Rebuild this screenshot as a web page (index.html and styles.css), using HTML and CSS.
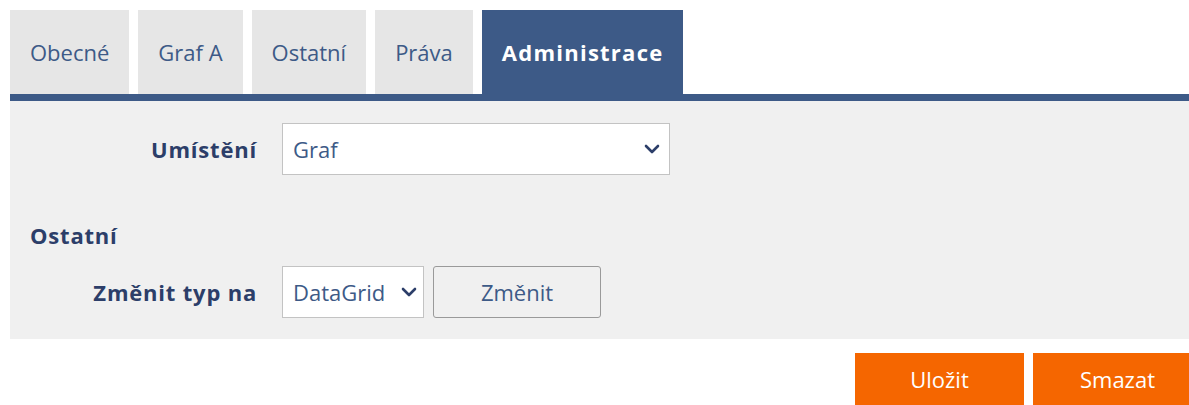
FILE: index.html
```html
<!DOCTYPE html>
<html lang="cs">
<head>
<meta charset="utf-8">
<title>Administrace</title>
<link rel="stylesheet" href="styles.css">
</head>
<body>
<div class="page">
  <nav class="tabs">
    <a class="tab">Obecné</a>
    <a class="tab">Graf A</a>
    <a class="tab">Ostatní</a>
    <a class="tab">Práva</a>
    <a class="tab active">Administrace</a>
  </nav>
  <section class="panel">
    <div class="row">
      <label class="label">Umístění</label>
      <div class="select wide">
        <span>Graf</span>
        <svg class="chevron" viewBox="0 0 16 10" width="16" height="10"><path d="M2 2l6 6 6-6" fill="none" stroke="currentColor" stroke-width="2.6" stroke-linecap="round" stroke-linejoin="round"/></svg>
      </div>
    </div>
    <h3 class="section">Ostatní</h3>
    <div class="row">
      <label class="label">Změnit typ na</label>
      <div class="select narrow">
        <span>DataGrid</span>
        <svg class="chevron" viewBox="0 0 16 10" width="16" height="10"><path d="M2 2l6 6 6-6" fill="none" stroke="currentColor" stroke-width="2.6" stroke-linecap="round" stroke-linejoin="round"/></svg>
      </div>
      <button class="btn">Změnit</button>
    </div>
  </section>
  <div class="actions">
    <button class="primary">Uložit</button>
    <button class="primary">Smazat</button>
  </div>
</div>
</body>
</html>
```
FILE: styles.css
```css
html, body {
  margin: 0;
  padding: 0;
  overflow: hidden;
  background: #fff;
}

body {
  font-family: "Open Sans", "Noto Sans", sans-serif;
  font-size: 22px;
  color: #3d5a87;
}

.page {
  width: 1192px;
  padding: 10px 0 0 10px;
}

/* tab strip */
.tabs {
  display: flex;
  gap: 9px;
  height: 84px;
}

.tab {
  display: flex;
  align-items: center;
  padding: 0 20px;
  background: #e6e6e6;
  color: #3d5a87;
}

.tab.active {
  background: #3d5a87;
  color: #fff;
  font-weight: bold;
  letter-spacing: 1.25px;
}

/* form panel */
.panel {
  border-top: 7px solid #3d5a87;
  background: #f0f0f0;
  padding: 22px 0 21px;
}

.row {
  display: flex;
  align-items: center;
  gap: 9px;
}

.label {
  width: 247px;
  margin-right: 16px;
  text-align: right;
  font-weight: bold;
  letter-spacing: 0.8px;
  color: #2c3e69;
}

.select {
  display: flex;
  align-items: center;
  justify-content: space-between;
  box-sizing: border-box;
  height: 52px;
  padding: 0 9px 0 10px;
  background: #fff;
  border: 1px solid #c3c3c3;
  color: #3d5a87;
}

.select.wide { width: 388px; }
.select.narrow { width: 142px; padding-right: 6px; }

.chevron { color: #2c3e69; flex: none; }

.section {
  margin: 0;
  box-sizing: border-box;
  height: 91px;
  padding: 28px 20px 0;
  display: flex;
  align-items: center;
  font-size: 22px;
  font-weight: bold;
  letter-spacing: 0.8px;
  color: #2c3e69;
}

.btn {
  box-sizing: border-box;
  width: 168px;
  height: 52px;
  font: inherit;
  color: #3d5a87;
  background: #f0f0f0;
  border: 1px solid #9a9a9a;
  border-radius: 3px;
}

/* bottom actions */
.actions {
  display: flex;
  justify-content: flex-end;
  gap: 9px;
  margin-top: 14px;
}

.primary {
  width: 169px;
  height: 52px;
  font: inherit;
  color: #fff;
  background: #f56600;
  border: none;
}
```
